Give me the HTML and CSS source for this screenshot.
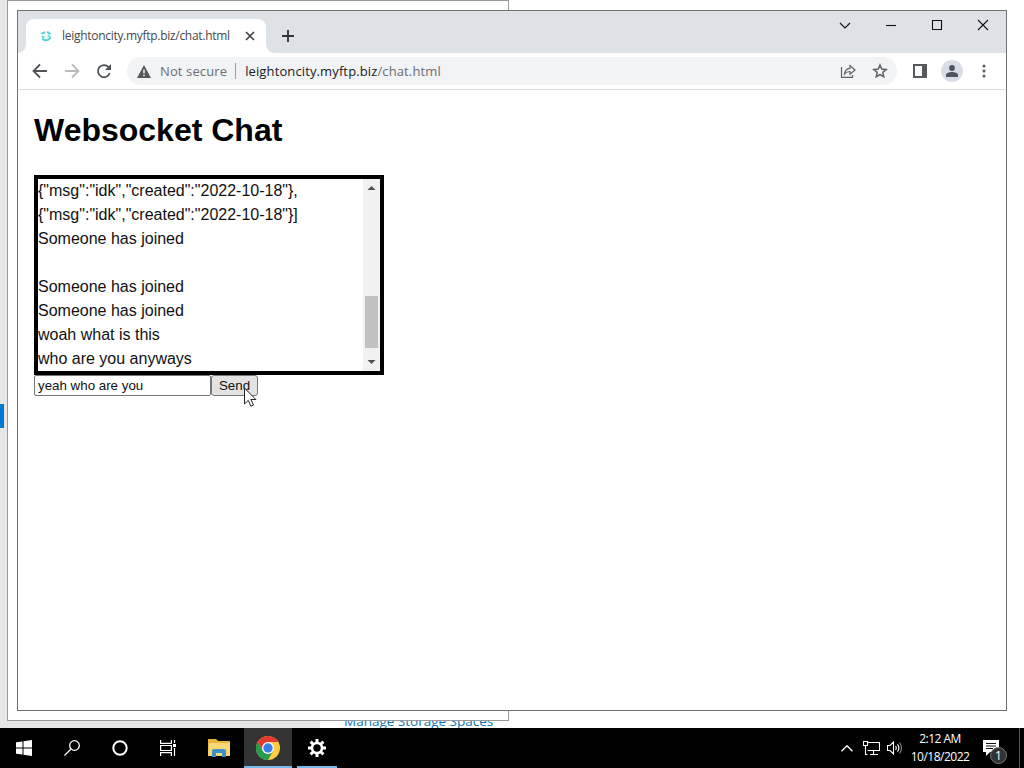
FILE: index.html
```html
<!DOCTYPE html>
<html lang="en">
<head>
  <meta charset="UTF-8" />
  <title>Websocket Chat</title>
  <link rel="stylesheet" href="styles.css">
</head>
<body>
  <div class="desktop">
    <div class="sidebar-bg"></div>
    <div class="accent"></div>
    <div class="storage-link">Manage Storage Spaces</div>
    <div class="back-window"></div>

    <div class="browser">
      <div class="tabstrip">
        <div class="tab">
          <svg class="favicon" width="12" height="12" viewBox="0 0 12 12" fill="none" stroke="#4dd5d8" stroke-width="2">
            <path d="M1.500 4Q3 2 5.500 2.500M7 2.200Q9.500 2.200 10 4.500M10.300 6.500Q10 10 6 10.300Q3.500 10.300 2.200 8.500"/>
            <path d="M1.500 6.500l3 1M7.500 5.500l2 1" stroke-width="1.500"/>
          </svg>
          <span class="tab-title">leightoncity.myftp.biz/chat.html</span>
          <svg class="tab-close" width="10" height="10" viewBox="0 0 10 10" stroke="#3c4043" stroke-width="1.600"><path d="M1 1l8 8M9 1L1 9"/></svg>
        </div>
        <svg class="new-tab" width="12" height="12" viewBox="0 0 12 12" stroke="#303336" stroke-width="1.800"><path d="M6 0v12M0 6h12"/></svg>
        <div class="controls">
          <svg width="46" height="28" viewBox="0 0 46 28"><path d="M18 12l5 5 5-5"/></svg>
          <svg width="46" height="28" viewBox="0 0 46 28"><path d="M18 14.500h10"/></svg>
          <svg width="46" height="28" viewBox="0 0 46 28"><path d="M18.500 9.500h9v9h-9z"/></svg>
          <svg width="46" height="28" viewBox="0 0 46 28"><path d="M18 9l10 10M28 9L18 19"/></svg>
        </div>
      </div>

      <div class="toolbar">
        <svg class="nav back" width="16" height="16" viewBox="0 0 16 16"><path d="M15 8H2M8 1.500L1.500 8 8 14.500"/></svg>
        <svg class="nav forward" width="16" height="16" viewBox="0 0 16 16"><path d="M1 8h13M8 1.500L14.500 8 8 14.500"/></svg>
        <svg class="nav" width="16" height="16" viewBox="0 0 16 16"><path d="M13.700 10A6 6 0 1 1 12.500 4.200L14 6"/><path d="M15 1v6H9z" fill="#505357" stroke="none"/></svg>
        <div class="omnibox">
          <svg width="14" height="13" viewBox="0 0 14 13"><path d="M7 0l7 13H0z" fill="#55585c"/><path d="M7 4.500v4M7 9.700v1.600" stroke="#fff" stroke-width="1.400"/></svg>
          <span class="insecure">Not secure</span>
          <span class="divider"></span>
          <span class="url">leightoncity.myftp.biz<span>/chat.html</span></span>
          <svg class="share" width="16" height="16" viewBox="0 0 16 16" fill="none" stroke="#5f6368" stroke-width="1.200"><path d="M1.500 4v10.400h11V12"/><path d="M4.500 11c.3-3.500 2-5.500 5.500-5.700V2.500L15 7l-5 4.300V8.500C7.500 8.500 5.800 9.300 4.500 11z"/></svg>
          <svg width="16" height="16" viewBox="0 0 16 16" fill="none" stroke="#5f6368" stroke-width="1.500"><path d="M8 2l1.700 4.100 4.500.4-3.400 2.900 1 4.400L8 11.500l-3.800 2.300 1-4.400L1.800 6.500l4.500-.4z"/></svg>
        </div>
        <svg class="panel" width="14" height="14" viewBox="0 0 14 14"><path d="M0 0h14v14H0z" fill="#55585c"/><path d="M2 2h7v10H2z" fill="#fff"/></svg>
        <div class="avatar"><svg width="12" height="12" viewBox="0 0 12 12" fill="#50555d"><circle cx="6" cy="3" r="2.900"/><path d="M0 12V10c0-2 3-3 6-3s6 1 6 3v2z"/></svg></div>
        <svg class="menu" width="4" height="14" viewBox="0 0 4 14" fill="#55585c"><circle cx="2" cy="2" r="1.500"/><circle cx="2" cy="7" r="1.500"/><circle cx="2" cy="12" r="1.500"/></svg>
      </div>

      <div class="page">
        <h1>Websocket Chat</h1>
        <div class="chat">
          <div class="messages">
            <div>{"msg":"idk","created":"2022-10-18"},</div>
            <div>{"msg":"idk","created":"2022-10-18"}]</div>
            <div>Someone has joined</div>
            <div>&nbsp;</div>
            <div>Someone has joined</div>
            <div>Someone has joined</div>
            <div>woah what is this</div>
            <div>who are you anyways</div>
          </div>
          <div class="scrollbar">
            <svg width="17" height="17" viewBox="0 0 17 17"><path d="M4.500 11l4-4 4 4z" fill="#505050"/></svg>
            <div class="thumb"></div>
            <svg width="17" height="17" viewBox="0 0 17 17"><path d="M4.500 6l4 4 4-4z" fill="#505050"/></svg>
          </div>
        </div>
        <div class="form">
          <input type="text" value="yeah who are you">
          <button>Send</button>
        </div>
      </div>
    </div>

    <svg class="cursor" width="15" height="22" viewBox="0 0 15 22"><path d="M1.500 1v16l3.800-3.600 2.600 5.800 2.600-1.200-2.600-5.500h5z" fill="#fff" stroke="#222" stroke-width="1"/></svg>
  </div>

  <div class="taskbar">
    <div class="item"><svg width="16" height="16" viewBox="0 0 16 16" fill="#fff"><path d="M0 2.300L6.500 1.400V7.500H0zM7.500 1.200L16 0v7.500H7.500zM0 8.500h6.500v6.100L0 13.700zM7.500 8.500H16V16l-8.500-1.200z"/></svg></div>
    <div class="item"><svg width="16" height="16" viewBox="0 0 16 16" fill="none" stroke="#fff" stroke-width="1.300"><circle cx="10.500" cy="5.500" r="4.800"/><path d="M7 9L.5 15.500"/></svg></div>
    <div class="item"><svg width="16" height="16" viewBox="0 0 16 16" fill="none" stroke="#fff" stroke-width="2"><circle cx="8" cy="8" r="6.700"/></svg></div>
    <div class="item"><svg width="16" height="16" viewBox="0 0 16 16" fill="none" stroke="#fff" stroke-width="1.200"><path d="M.6 0v3.400h10.800V0M.6 16v-3.400h10.800V16M.6 5.500h10.800v5H.6zM14.500 0v3M14.500 8v8"/><path d="M13 4h3v3h-3z" fill="#fff" stroke="none"/></svg></div>
    <div class="item folder"><svg width="22" height="18" viewBox="0 0 22 18"><path d="M0 0h8l2 2h12v15H0z" fill="#e9b53c"/><path d="M1 4h21v13H0z" fill="#f8d775"/><path d="M4 18v-6q0-2 2-2h10q2 0 2 2v6h-4v-4H8v4z" fill="#3f8fcb"/></svg></div>
    <div class="item active">
      <svg width="24" height="24" viewBox="0 0 24 24">
        <circle cx="12" cy="12" r="12" fill="#ffcd40"/>
        <path d="M1.600 6A12 12 0 0 1 22.400 6H12L6.800 15z" fill="#e33b2e"/>
        <path d="M1.600 6A12 12 0 0 0 12 24l5.200-9-10.400 0z" fill="#249b4e"/>
        <circle cx="12" cy="12" r="6" fill="#fff"/><circle cx="12" cy="12" r="4.700" fill="#3b7de8"/>
      </svg>
    </div>
    <div class="item running">
      <svg width="18" height="18" viewBox="0 0 18 18" fill="none" stroke="#fff"><circle cx="9" cy="9" r="5" stroke-width="2.600"/><path d="M9 0v4M9 14v4M0 9h4M14 9h4M2.600 2.600l2.900 2.900M12.500 12.500l2.900 2.900M15.400 2.600l-2.900 2.900M5.500 12.500l-2.900 2.900" stroke-width="3"/></svg>
    </div>
    <div class="tray">
      <svg width="12" height="7" viewBox="0 0 12 7" fill="none" stroke="#fff" stroke-width="1.400"><path d="M.5 6.300L6 .8l5.500 5.500"/></svg>
      <svg class="network" width="17" height="14" viewBox="0 0 17 14" fill="none" stroke="#fff" stroke-width="1.100"><path d="M5 1.500h11.500v8h-12M2.500 5v8.500h2M10.500 9.500v4M7 13.500h8"/><path d="M.5.5h4v4h-4z"/></svg>
      <svg class="sound" width="16" height="14" viewBox="0 0 16 14" fill="none" stroke="#fff" stroke-width="1.100"><path d="M.5 4.500h2.500l3.500-3.500v12L3 9.500H.5zM8.500 5q1.500 2 0 4M10.500 3.300q2.800 3.700 0 7.400"/><path d="M12.500 1.500q4 5.500 0 11" stroke="#888"/></svg>
      <div class="clock"><span class="time">2:12 AM</span><span class="date">10/18/2022</span></div>
      <div class="notify">
        <svg width="16" height="16" viewBox="0 0 16 16"><path d="M0 0h16v12H7l-4 4v-4H0z" fill="#fff"/><path d="M3 3.500h10M3 6h10M3 8.500h7" stroke="#111"/></svg>
        <span class="badge">1</span>
      </div>
      <div class="show-desktop"></div>
    </div>
  </div>
</body>
</html>
```
FILE: styles.css
```css
* {
  box-sizing: border-box;
}
body {
  margin: 0;
  width: 1024px;
  height: 768px;
  overflow: hidden;
  font-family: "Open Sans", sans-serif;
}
svg {
  display: block;
  flex: none;
}
.desktop {
  position: relative;
  height: 728px;
  background: #fff;
  overflow: hidden;
}
.sidebar-bg {
  position: absolute;
  left: 0;
  top: 0;
  width: 320px;
  height: 728px;
  background: #e6e6e6;
}
.accent {
  position: absolute;
  left: 0;
  top: 404px;
  width: 4px;
  height: 24px;
  background: #0078d0;
}
.storage-link {
  position: absolute;
  left: 344px;
  top: 711px;
  font-size: 13.5px;
  line-height: 20px;
  color: #1273b5;
  white-space: nowrap;
}
.back-window {
  position: absolute;
  left: 7px;
  top: 0;
  width: 502px;
  height: 721px;
  background: #fff;
  border: 1px solid #999;
}
.browser {
  position: absolute;
  left: 17px;
  top: 10px;
  width: 990px;
  height: 701px;
  background: #fff;
  border: 1px solid #707173;
}

/* tabs */
.tabstrip {
  display: flex;
  height: 42px;
  padding-left: 8px;
  background: #dee1e6;
}
.tab {
  position: relative;
  display: flex;
  align-items: center;
  width: 240px;
  height: 34px;
  margin-top: 8px;
  padding: 0 11px 0 14px;
  border-radius: 8px 8px 0 0;
  background: #fff;
}
.tab::before,
.tab::after {
  content: "";
  position: absolute;
  bottom: 0;
  left: -8px;
  width: 8px;
  height: 8px;
  background: radial-gradient(circle at 0 0, #dee1e6 7.5px, #fff 8px);
}
.tab::after {
  left: auto;
  right: -8px;
  background: radial-gradient(circle at 100% 0, #dee1e6 7.5px, #fff 8px);
}
.tab-title {
  margin-left: 10px;
  padding-bottom: 2px;
  font-size: 12px;
  letter-spacing: -0.29px;
  color: #45484c;
  white-space: nowrap;
}
.tab-close {
  margin-left: auto;
}
.new-tab {
  margin: 19px 0 0 16px;
}
.controls {
  display: flex;
  margin-left: auto;
}
.controls svg {
  fill: none;
  stroke: #111;
  stroke-width: 1.1;
}

/* toolbar */
.toolbar {
  display: flex;
  align-items: center;
  height: 37px;
  padding: 0 20px 0 14px;
  border-bottom: 1px solid #dadce0;
}
.nav {
  margin-right: 16px;
  fill: none;
  stroke: #505357;
  stroke-width: 1.8;
}
.nav.forward {
  stroke: #b9bbbe;
}
.omnibox {
  display: flex;
  align-items: center;
  width: 770px;
  height: 28px;
  margin-left: -1px;
  padding: 0 9px 0 10px;
  border-radius: 14px;
  background: #f1f3f4;
  font-size: 13px;
  letter-spacing: 0.12px;
  color: #202124;
  white-space: nowrap;
}
.insecure {
  margin-left: 9px;
  color: #6b6f73;
}
.divider {
  width: 1px;
  height: 16px;
  margin: 0 9px 0 8px;
  background: #9a9da1;
}
.url span {
  color: #6b6f73;
}
.share {
  margin: 0 16px 0 auto;
}
.panel {
  margin-left: 16px;
}
.avatar {
  display: flex;
  align-items: center;
  justify-content: center;
  width: 22px;
  height: 22px;
  margin-left: 14px;
  border-radius: 50%;
  background: #dadde5;
}
.menu {
  margin-left: auto;
}

/* page */
.page {
  padding: 20px 16px;
  font-family: "Liberation Sans", Arial, sans-serif;
  font-size: 16px;
  line-height: 24px;
}
h1 {
  margin: 0 0 25px;
  font-size: 32px;
  line-height: 40px;
}
.chat {
  display: flex;
  width: 350px;
  height: 200px;
  border: 4px solid #000;
}
.messages {
  flex: 1;
  color: #111;
  white-space: nowrap;
}
.scrollbar {
  display: flex;
  flex-direction: column;
  width: 17px;
  background: #f1f1f1;
}
.thumb {
  width: 13px;
  height: 52px;
  margin: auto 2px 6px;
  background: #c1c1c1;
}
.form {
  display: flex;
}
.form input,
.form button {
  height: 21px;
  margin: 0;
  border: 1px solid #767676;
  font-family: "Liberation Sans", Arial, sans-serif;
  font-size: 13.333px;
  color: #111;
}
.form input {
  width: 177px;
  padding: 1px 3px;
  border-radius: 2px;
}
.form button {
  width: 47px;
  padding: 0;
  border-radius: 3px;
  background: #e2e2e2;
}
.cursor {
  position: absolute;
  left: 243px;
  top: 387px;
}

/* taskbar */
.taskbar {
  display: flex;
  height: 40px;
  background: #000;
  color: #fff;
}
.item {
  display: flex;
  align-items: center;
  justify-content: center;
  width: 48px;
  height: 40px;
}
.item.folder {
  width: 52px;
  padding-left: 1px;
}
.item.active {
  background: #333;
  border-bottom: 2px solid #76b9ed;
}
.item.active svg {
  margin-top: 2px;
}
.item.running {
  width: 40px;
  margin-left: 5px;
  border-bottom: 2px solid #76b9ed;
}
.item.running svg {
  margin-top: 2px;
}
.tray {
  display: flex;
  align-items: center;
  margin-left: auto;
}
.network {
  margin-left: 10px;
}
.sound {
  margin-left: 7px;
}
.clock {
  display: flex;
  flex-direction: column;
  align-items: center;
  width: 58px;
  margin-left: 8px;
  font-size: 12px;
  letter-spacing: -0.5px;
  line-height: 18px;
  white-space: nowrap;
}
.notify {
  position: relative;
  margin-left: 14px;
}
.badge {
  position: absolute;
  left: 7px;
  top: 7px;
  width: 17px;
  height: 17px;
  border: 1px solid #777;
  border-radius: 50%;
  background: #333;
  font-size: 12px;
  line-height: 15px;
  text-align: center;
}
.show-desktop {
  width: 5px;
  height: 40px;
  margin-left: 20px;
  border-left: 1px solid #555;
}
```
